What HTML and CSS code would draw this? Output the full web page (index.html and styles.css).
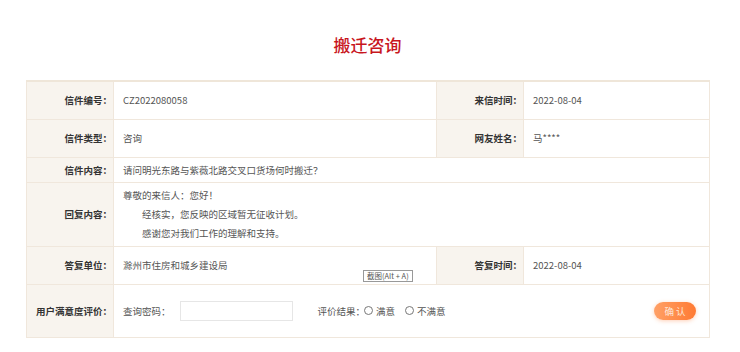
FILE: index.html
```html
<!DOCTYPE html>
<html lang="zh-CN">
  <head>
    <meta charset="UTF-8" />
    <meta name="viewport" content="width=device-width, initial-scale=1.0" />
    <title>搬迁咨询</title>
    <link rel="stylesheet" href="styles.css">
  </head>
  <body>
    <div class="container">
      <h2 class="title">搬迁咨询</h2>
      <table class="letter">
        <colgroup>
          <col class="col-label" />
          <col class="col-value" />
          <col class="col-label" />
          <col class="col-value2" />
        </colgroup>
        <tr class="row-std">
          <th>信件编号：</th>
          <td>CZ2022080058</td>
          <th>来信时间：</th>
          <td>2022-08-04</td>
        </tr>
        <tr class="row-std">
          <th>信件类型：</th>
          <td>咨询</td>
          <th>网友姓名：</th>
          <td>马****</td>
        </tr>
        <tr class="row-short">
          <th>信件内容：</th>
          <td colspan="3">请问明光东路与紫薇北路交叉口货场何时搬迁？</td>
        </tr>
        <tr class="row-reply">
          <th>回复内容：</th>
          <td colspan="3">
            <p>尊敬的来信人：您好！</p>
            <p class="indent">经核实，您反映的区域暂无征收计划。</p>
            <p class="indent">感谢您对我们工作的理解和支持。</p>
          </td>
        </tr>
        <tr class="row-std">
          <th>答复单位：</th>
          <td class="unit">滁州市住房和城乡建设局<span class="tip">截图(Alt + A)</span></td>
          <th>答复时间：</th>
          <td>2022-08-04</td>
        </tr>
        <tr class="row-rate">
          <th>用户满意度评价：</th>
          <td colspan="3">
            <div class="rate">
              <span>查询密码：</span>
              <input type="text" class="pwd" />
              <span class="result">评价结果：</span>
              <label><i class="radio"></i>满意</label>
              <label><i class="radio"></i>不满意</label>
              <button class="confirm">确 认</button>
            </div>
          </td>
        </tr>
      </table>
    </div>
  </body>
</html>
```

FILE: styles.css
```css
body {
  margin: 0;
  font-family: "Noto Sans CJK SC", "Noto Sans", sans-serif;
  background-color: #fff;
  color: #555;
}
.container {
  width: 683px;
  margin: 0 auto;
  padding-top: 35px;
  padding-right: 5px;
}
.title {
  margin: 0 0 25px;
  font-size: 17px;
  font-weight: 500;
  line-height: 20px;
  text-align: center;
  color: #c8161d;
}
.letter {
  width: 683px;
  border-collapse: collapse;
  table-layout: fixed;
  font-size: 9.5px;
  border-top: 2px solid #efe6d9;
}
.col-label {
  width: 87px;
}
.col-value {
  width: 323px;
}
.col-value2 {
  width: 186px;
}
.letter th,
.letter td {
  border: 1px solid #f0e7dc;
  padding: 0;
}
.letter th {
  background-color: #f8f4ee;
  text-align: right;
  padding-right: 1px;
  color: #333;
  font-weight: bold;
}
.letter td {
  padding-left: 9px;
  color: #555;
}
.row-std {
  height: 38px;
}
.row-short {
  height: 25px;
}
.row-reply {
  height: 64px;
}
.row-rate {
  height: 53px;
}
.row-reply p {
  margin: 0;
  line-height: 19px;
}
.row-reply .indent {
  text-indent: 19px;
}
.unit {
  position: relative;
}
.tip {
  position: absolute;
  left: 249px;
  bottom: 2px;
  font-size: 7.5px;
  line-height: 10px;
  padding: 0 3px;
  border: 1px solid #999;
  background: #fff;
  color: #555;
}
.rate {
  display: flex;
  align-items: center;
}
.pwd {
  width: 113px;
  height: 20px;
  box-sizing: border-box;
  margin-left: 9px;
  border: 1px solid #e6e6e6;
}
.result {
  margin-left: 25px;
}
.rate label {
  display: flex;
  align-items: center;
  margin-left: -1px;
  margin-right: 11px;
}
.radio {
  width: 7px;
  height: 7px;
  border: 1px solid #777;
  border-radius: 50%;
  margin-right: 3px;
}
.confirm {
  margin-left: auto;
  margin-right: 13px;
  width: 42px;
  height: 18px;
  border: none;
  border-radius: 9px;
  background: linear-gradient(to right, #ffa066, #ff7a33);
  box-shadow: 0 1px 4px rgba(255, 120, 50, 0.35);
  color: #fde7d8;
  font-family: inherit;
  font-size: 9.5px;
  padding: 0;
}
```
